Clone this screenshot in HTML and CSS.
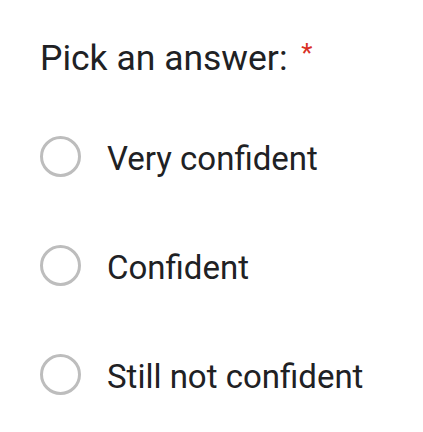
FILE: index.html
```html
<!DOCTYPE html>
<html lang="en">
<head>
    <meta charset="UTF-8">
    <title>Pick an answer</title>
    <link rel="stylesheet" href="styles.css">
</head>
<body>
    <div class="question">
        <div class="question-title">Pick an answer: <span class="required">*</span></div>

        <div class="options">
            <label class="option">
                <span class="radio"></span>
                <span class="option-text">Very confident</span>
            </label>
            <label class="option">
                <span class="radio"></span>
                <span class="option-text">Confident</span>
            </label>
            <label class="option">
                <span class="radio"></span>
                <span class="option-text">Still not confident</span>
            </label>
        </div>
    </div>
</body>
</html>
```

FILE: styles.css
```css
body {
    margin: 0;
    background-color: #fff;
    color: #202124;
    font-family: Roboto, "Noto Sans", sans-serif;
}
.question {
    padding: 36px 0 0 40px;
}
.question-title {
    font-size: 35.5px;
    line-height: 44px;
}
.required {
    color: #d93025;
    font-size: 26px;
    vertical-align: top;
    line-height: 34px;
    margin-left: 5px;
}
.options {
    display: flex;
    flex-direction: column;
    gap: 68px;
    margin-top: 56px;
}
.option {
    display: flex;
    align-items: center;
    gap: 26px;
    height: 41px;
    font-size: 33px;
}
.radio {
    width: 41px;
    height: 41px;
    box-sizing: border-box;
    border: 3px solid #bdbdbd;
    border-radius: 50%;
    flex-shrink: 0;
}
.option-text {
    padding-top: 3px;
}
```
